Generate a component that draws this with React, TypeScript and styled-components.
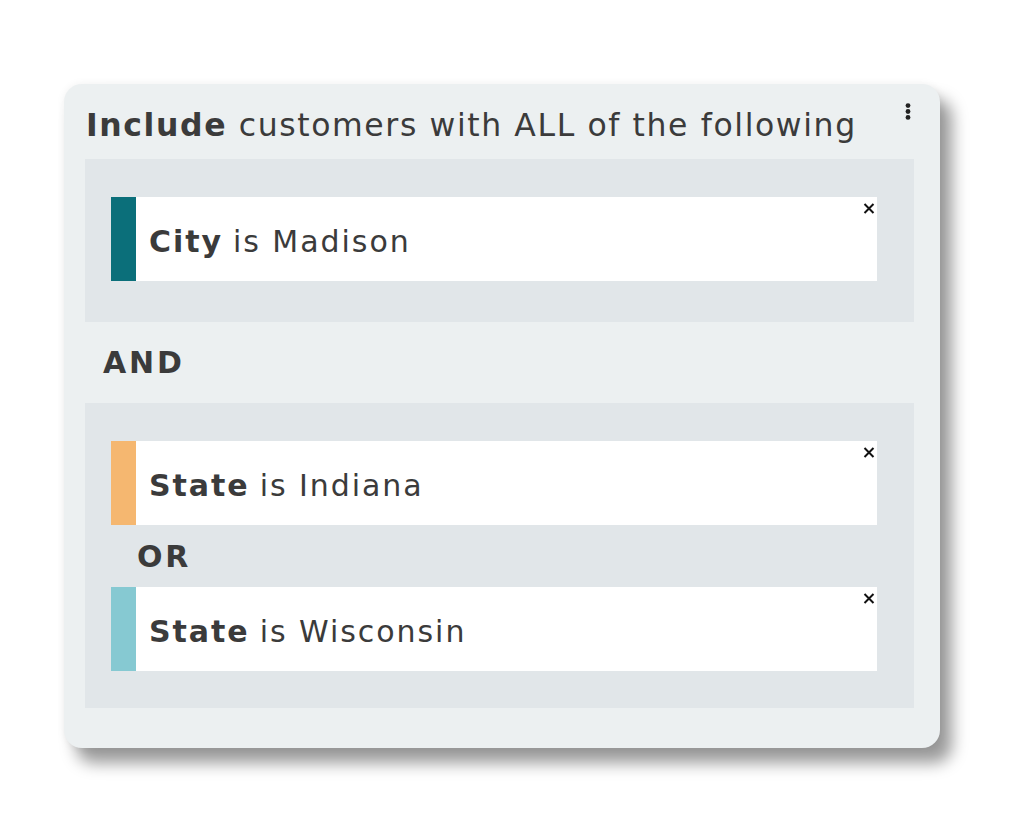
import React from 'react';
import styled, { createGlobalStyle } from 'styled-components';

const GlobalStyle = createGlobalStyle`
  body {
    margin: 0;
    background: #ffffff;
    font-family: 'DejaVu Sans', 'Noto Sans', sans-serif;
    color: #3b3b3b;
  }
`;

type Condition = {
  field: string;
  value: string;
  color: string;
};

type Group = {
  conditions: Condition[];
};

const groups: Group[] = [
  { conditions: [{ field: 'City', value: 'Madison', color: '#0b6f7a' }] },
  {
    conditions: [
      { field: 'State', value: 'Indiana', color: '#f5b770' },
      { field: 'State', value: 'Wisconsin', color: '#86c9d2' },
    ],
  },
];

const Page = styled.div`
  padding: 84px 0 85px 64px;
`;

const Card = styled.div`
  position: relative;
  width: 876px;
  height: 664px;
  box-sizing: border-box;
  padding: 20px 26px 41px 21px;
  background: #ecf0f1;
  border-radius: 18px;
  box-shadow: 0 0 8px rgba(0, 0, 0, 0.06), 12px 15px 16px rgba(0, 0, 0, 0.4);
`;

const Title = styled.h1`
  margin: 0 0 12px 1px;
  font-size: 31.5px;
  line-height: 43px;
  font-weight: 400;
  letter-spacing: 1.6px;
  color: #3b3b3b;
  white-space: nowrap;

  strong {
    font-weight: 700;
  }
`;

const Menu = styled.button`
  position: absolute;
  top: 16px;
  right: 26px;
  width: 12px;
  height: 22px;
  padding: 0;
  border: none;
  background: none;
  display: flex;
  align-items: center;
  justify-content: center;
`;

const GroupBox = styled.div<{ $first?: boolean }>`
  background: #e1e6e9;
  padding: 38px 37px ${(p) => (p.$first ? 41 : 37)}px 26px;
  display: flex;
  flex-direction: column;
`;

const Joiner = styled.div<{ $inner?: boolean }>`
  height: ${(p) => (p.$inner ? 62 : 81)}px;
  display: flex;
  align-items: center;
  padding-left: ${(p) => (p.$inner ? 26 : 18)}px;
  font-size: 30px;
  font-weight: 700;
  letter-spacing: 2.8px;
  color: #3b3b3b;
`;

const Row = styled.div<{ $color: string }>`
  position: relative;
  height: 84px;
  background: #ffffff;
  border-left: 25px solid ${(p) => p.$color};
  display: flex;
  align-items: center;
  padding: 5px 0 0 13px;
  box-sizing: border-box;
  font-size: 30px;
  letter-spacing: 1.95px;
  color: #3b3b3b;

  strong {
    font-weight: 700;
    margin-right: 10px;
  }
`;

const Close = styled.button`
  position: absolute;
  top: 5px;
  right: 2px;
  width: 13px;
  height: 12px;
  padding: 0;
  border: none;
  background: none;
  display: flex;
  align-items: center;
  justify-content: center;
`;

function CloseIcon() {
  return (
    <svg width="12" height="11" viewBox="0 0 12 11">
      <path d="M1.5 1 L10.5 10 M10.5 1 L1.5 10" stroke="#111" strokeWidth="2" />
    </svg>
  );
}

function DotsIcon() {
  return (
    <svg width="6" height="17" viewBox="0 0 6 17">
      <circle cx="3" cy="2.6" r="2.4" fill="#222" />
      <circle cx="3" cy="8.5" r="2.4" fill="#222" />
      <circle cx="3" cy="14.4" r="2.4" fill="#222" />
    </svg>
  );
}

function ConditionRow({ condition }: { condition: Condition }) {
  return (
    <Row $color={condition.color}>
      <strong>{condition.field}</strong>is {condition.value}
      <Close>
        <CloseIcon />
      </Close>
    </Row>
  );
}

export default function App() {
  return (
    <Page>
      <GlobalStyle />
      <Card>
        <Title>
          <strong>Include</strong> customers with ALL of the following
        </Title>
        <Menu>
          <DotsIcon />
        </Menu>
        {groups.map((group, gi) => (
          <React.Fragment key={gi}>
            {gi > 0 && <Joiner>AND</Joiner>}
            <GroupBox $first={gi === 0}>
              {group.conditions.map((c, ci) => (
                <React.Fragment key={ci}>
                  {ci > 0 && <Joiner $inner>OR</Joiner>}
                  <ConditionRow condition={c} />
                </React.Fragment>
              ))}
            </GroupBox>
          </React.Fragment>
        ))}
      </Card>
    </Page>
  );
}
